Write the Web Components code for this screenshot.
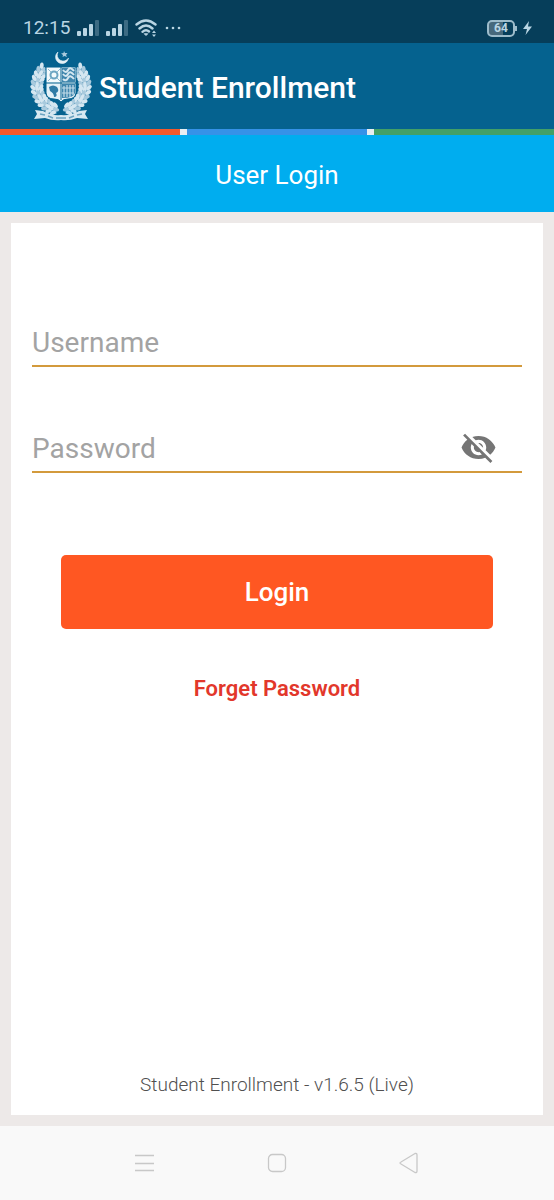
<!DOCTYPE html>
<html lang="en">
<head>
<meta charset="utf-8">
<meta name="viewport" content="width=device-width, initial-scale=1">
<title>Student Enrollment</title>
<style>
  body {
    margin: 0;
    font-family: Roboto, "Liberation Sans", sans-serif;
    background: #ede9e8;
  }
</style>
</head>
<body>
<login-screen></login-screen>

<script>
class StatusBar extends HTMLElement {
  constructor() {
    super();
    this._shadowRoot = this.attachShadow({mode: 'open'});
  }

  connectedCallback() {
    this.render();
  }

  render() {
    const signal = `
      <svg width="23" height="16" viewBox="0 0 23 16" fill="currentColor" aria-hidden="true">
        <rect x="0" y="11" width="4" height="5" rx="1"/>
        <rect x="6" y="8" width="4" height="8" rx="1"/>
        <rect x="12" y="4" width="4" height="12" rx="1"/>
        <rect x="18" y="0" width="4" height="16" rx="1" opacity=".3"/>
      </svg>`;
    this._shadowRoot.innerHTML = `
      <style>
        :host {
          display: flex;
          align-items: center;
          justify-content: space-between;
          box-sizing: border-box;
          height: 43px;
          padding: 13px 22px 0 23px;
          background: #063e5a;
          color: #b9d5e3;
          font-size: 19px;
          line-height: 30px;
        }
        .group {
          display: flex;
          align-items: center;
          gap: 6px;
        }
        .time {
          margin-right: 1px;
        }
        .battery {
          box-sizing: border-box;
          position: relative;
          width: 28px;
          height: 17px;
          margin-right: 2px;
          border: 2px solid #9dbccb;
          border-radius: 5px;
          background: linear-gradient(to right, #47697c 60%, transparent 60%);
          font-size: 12px;
          font-weight: 700;
          line-height: 13px;
          text-align: center;
        }
        .battery::after {
          content: "";
          position: absolute;
          top: 4px;
          right: -4px;
          width: 2px;
          height: 5px;
          background: #9dbccb;
        }
      </style>
      <div class="group">
        <span class="time">12:15</span>
        ${signal}
        ${signal}
        <svg width="23" height="18" viewBox="0 0 23 18" fill="none" stroke="currentColor" stroke-width="2.400" stroke-linecap="round" aria-hidden="true">
          <path d="M1.500 5.500Q11 -2.500 20.500 5.500M4.500 9.500Q11 3.500 17.500 9.500M7.500 12.800Q11 9.800 14 12.500"/>
          <path d="M9.500 15L11 16.500L12.500 15Z" fill="currentColor" stroke-width="1"/>
          <path d="M17 14L19 11.500L21 14ZM17 15.500L19 18L21 15.500Z" fill="currentColor" stroke="none"/>
        </svg>
        <svg width="18" height="4" viewBox="0 0 18 4" fill="currentColor" aria-hidden="true">
          <circle cx="3" cy="2" r="1.300"/><circle cx="9" cy="2" r="1.300"/><circle cx="15" cy="2" r="1.300"/>
        </svg>
      </div>
      <div class="group">
        <div class="battery">64</div>
        <svg width="9" height="14" viewBox="0 0 9 14" fill="currentColor" aria-hidden="true">
          <path d="M6 0L0 8H4L2.500 14L9 5.500H5Z"/>
        </svg>
      </div>
    `;
  }
}
customElements.define('status-bar', StatusBar);

class StateEmblem extends HTMLElement {
  constructor() {
    super();
    this._shadowRoot = this.attachShadow({mode: 'open'});
  }

  connectedCallback() {
    this.render();
  }

  // left half of the wreath, the right half is mirrored
  leaves() {
    let out = '';
    for (let i = 0; i < 13; i++) {
      const deg = 222 - i * 10;
      const a = deg * Math.PI / 180;
      [[20, 38, 2], [24, 0, 0], [28, -38, 2]].forEach(([r, tilt, lag]) => {
        const x = 31 + r * Math.cos(a + lag * 0.04);
        const y = 36 + r * Math.sin(a + lag * 0.04);
        const tone = (i + lag) % 3 ? '#d5e7f1' : '#a9cadd';
        out += `<ellipse cx="${x.toFixed(1)}" cy="${y.toFixed(1)}" rx="3.200" ry="1.900" fill="${tone}"
          transform="rotate(${deg + 90 + tilt} ${x.toFixed(1)} ${y.toFixed(1)})"/>`;
      });
    }
    return out;
  }

  render() {
    this._shadowRoot.innerHTML = `
      <style>
        :host {
          display: block;
        }
        svg {
          display: block;
        }
      </style>
      <svg width="62" height="72" viewBox="0 0 62 72" role="img" aria-label="State emblem">
        <path d="M28 2A6.500 6.500 0 1 0 38.500 8A6 6 0 0 1 28 2Z" fill="#e3f0f6" stroke="#e3f0f6" stroke-width=".6"/>
        <path d="M34 1L35 3L37.500 3L36 5L37 7L34.500 6L32.500 7L33 5L31 3.500L33.500 3Z" fill="#a9cadd"/>
        <g id="half">
          <path d="M12 18A25 25 0 0 0 27 60" fill="none" stroke="#5f9dbf" stroke-width="8"/>
          ${this.leaves()}
        </g>
        <use href="#half" transform="translate(62 0) scale(-1 1)"/>
        <path d="M16 17H46V43Q45 49 38 49Q33 49 31 52Q29 49 24 49Q17 49 16 43Z" fill="#e4f1f7" stroke="#05628f"/>
        <path d="M17 18H30V32H17Z" fill="#f4fafc"/>
        <path d="M32 18H45V32H32ZM32 34H45V43Q44 48 32 48Z" fill="#3f86ad"/>
        <circle cx="24" cy="25" r="3.500" fill="none" stroke="#6da5c2" stroke-width="2"/>
        <path d="M18 19L21 22M30 19L27 22M18 31L21 28M30 31L27 28" stroke="#8db9d0"/>
        <path d="M33 20Q36 24 38 20T44 21M33 24Q36 28 38 24T44 25M33 29Q36 32 38 28T44 29" fill="none" stroke="#d4e7f0" stroke-width="2"/>
        <path d="M19 37Q23 34 27 37Q30 41 26 43Q28 47 24 47Q24 43 20 41Z" fill="#2f7ba5"/>
        <path d="M34 36V47M37 35V47M40 35V47M43 35V45M32 38H45M32 43H44" stroke="#c4dce9" stroke-width="1.200"/>
        <path d="M31 17V50M16 33H46" stroke="#05628f" stroke-width="1"/>
        <path d="M5 60L13 61Q22 66 31 65Q40 66 49 61L57 60L55 64L58 69L47 68Q39 71 31 70Q23 71 15 68L4 69L7 64Z" fill="#d7e8f1"/>
        <path d="M10 64L15 65M18 66L23 68M26 68H36M39 68L44 66M47 65L52 64" stroke="#6ba3c1" stroke-width="1.500"/>
      </svg>
    `;
  }
}
customElements.define('state-emblem', StateEmblem);

class AppHeader extends HTMLElement {
  constructor() {
    super();
    this._shadowRoot = this.attachShadow({mode: 'open'});
  }

  connectedCallback() {
    this.render();
  }

  render() {
    this._shadowRoot.innerHTML = `
      <style>
        :host {
          display: block;
          color: #fff;
        }
        .brand {
          display: flex;
          align-items: center;
          gap: 7px;
          height: 86px;
          padding: 0 30px;
          background: #05628f;
        }
        h1 {
          margin: 0;
          padding-top: 3px;
          font-size: 30px;
          font-weight: 500;
          line-height: 36px;
        }
        .stripes {
          display: grid;
          grid-template-columns: repeat(3, 1fr);
          gap: 7px;
          height: 6px;
          background: #e8eef2;
        }
        .orange { background: #f4592b; }
        .blue { background: #3592e8; }
        .green { background: #43a066; }
        h2 {
          margin: 0;
          padding: 24px 0 21px;
          background: #00adef;
          font-size: 26px;
          font-weight: 400;
          line-height: 32px;
          text-align: center;
        }
      </style>
      <div class="brand">
        <state-emblem></state-emblem>
        <h1>Student Enrollment</h1>
      </div>
      <div class="stripes">
        <span class="orange"></span><span class="blue"></span><span class="green"></span>
      </div>
      <h2><slot></slot></h2>
    `;
  }
}
customElements.define('app-header', AppHeader);

class TextField extends HTMLElement {
  constructor() {
    super();
    this._shadowRoot = this.attachShadow({mode: 'open'});
  }

  connectedCallback() {
    this.render();
  }

  render() {
    const label = this.getAttribute('label');
    const type = this.getAttribute('type') || 'text';
    this._shadowRoot.innerHTML = `
      <style>
        :host {
          display: flex;
          align-items: center;
          height: 48px;
          border-bottom: 2px solid #d39a3c;
        }
        input {
          flex: 1;
          min-width: 0;
          height: 48px;
          padding: 2px 0 0;
          border: 0;
          outline: 0;
          background: none;
          color: #333;
          font: 400 28px/36px Roboto, "Liberation Sans", sans-serif;
        }
        input::placeholder {
          color: #a3a3a3;
          opacity: 1;
        }
      </style>
      <input type="${type}" placeholder="${label}" aria-label="${label}">
      <slot></slot>
    `;
  }

  toggle() {
    const input = this._shadowRoot.querySelector('input');
    input.type = input.type === 'password' ? 'text' : 'password';
  }
}
customElements.define('text-field', TextField);

class VisibilityToggle extends HTMLElement {
  constructor() {
    super();
    this._shadowRoot = this.attachShadow({mode: 'open'});
  }

  connectedCallback() {
    this.render();
    this._shadowRoot.querySelector('button').addEventListener('click', () => {
      this.closest('text-field').toggle();
    });
  }

  render() {
    this._shadowRoot.innerHTML = `
      <style>
        :host {
          display: block;
          padding-right: 25px;
        }
        button {
          display: block;
          padding: 0;
          border: 0;
          background: none;
          color: #757575;
          cursor: pointer;
        }
        svg {
          display: block;
        }
      </style>
      <button type="button" aria-label="Show password">
        <svg width="37" height="37" viewBox="0 0 24 24" aria-hidden="true">
          <path fill="currentColor" d="M12 7c2.760 0 5 2.240 5 5 0 .650-.130 1.260-.360 1.830l2.920 2.920c1.510-1.260 2.700-2.890 3.430-4.750-1.730-4.390-6-7.500-11-7.500-1.400 0-2.740.250-3.980.700l2.160 2.160C10.740 7.130 11.350 7 12 7zM2 4.270l2.280 2.280.460.460C3.080 8.300 1.780 10.020 1 12c1.730 4.390 6 7.500 11 7.500 1.550 0 3.030-.300 4.380-.840l.420.420L19.730 22 21 20.730 3.270 3 2 4.270zM7.530 9.800l1.550 1.550c-.050.210-.080.430-.080.650 0 1.660 1.340 3 3 3 .220 0 .440-.030.650-.080l1.550 1.550c-.670.330-1.410.530-2.200.530-2.760 0-5-2.240-5-5 0-.790.200-1.530.530-2.200zm4.310-.780l3.150 3.150.020-.160c0-1.660-1.340-3-3-3l-.170.010z"/>
        </svg>
      </button>
    `;
  }
}
customElements.define('visibility-toggle', VisibilityToggle);

class LoginForm extends HTMLElement {
  constructor() {
    super();
    this._shadowRoot = this.attachShadow({mode: 'open'});
  }

  connectedCallback() {
    this.render();
  }

  render() {
    this._shadowRoot.innerHTML = `
      <style>
        :host {
          display: flex;
          flex-direction: column;
          box-sizing: border-box;
          padding: 94px 21px 16px;
          background: #fff;
        }
        form {
          display: flex;
          flex-direction: column;
          gap: 56px;
        }
        .actions {
          display: flex;
          flex-direction: column;
          align-items: center;
          gap: 46px;
          padding: 26px 29px 0;
        }
        button {
          width: 100%;
          height: 74px;
          border: 0;
          border-radius: 5px;
          background: #ff5722;
          color: #fff;
          font: 500 26px/32px Roboto, "Liberation Sans", sans-serif;
          cursor: pointer;
        }
        a {
          color: #e2372b;
          font-size: 22px;
          font-weight: 600;
          line-height: 28px;
          text-decoration: none;
        }
        footer {
          margin-top: auto;
          color: #505050;
          font-size: 19px;
          font-weight: 300;
          line-height: 28px;
          text-align: center;
        }
      </style>
      <form>
        <text-field label="Username"></text-field>
        <text-field label="Password" type="password"><visibility-toggle></visibility-toggle></text-field>
        <div class="actions">
          <button type="button">Login</button>
          <a href="#forget">Forget Password</a>
        </div>
      </form>
      <footer><slot name="version"></slot></footer>
    `;
  }
}
customElements.define('login-form', LoginForm);

class NavBar extends HTMLElement {
  constructor() {
    super();
    this._shadowRoot = this.attachShadow({mode: 'open'});
  }

  connectedCallback() {
    this.render();
  }

  render() {
    this._shadowRoot.innerHTML = `
      <style>
        :host {
          display: flex;
          justify-content: center;
          height: 74px;
          background: #f9f9f9;
        }
        button {
          display: flex;
          align-items: center;
          justify-content: center;
          width: 132px;
          padding: 0;
          border: 0;
          background: none;
          color: #c8c8c8;
        }
        svg {
          fill: none;
          stroke: currentColor;
          stroke-width: 1.300;
          stroke-linejoin: round;
        }
      </style>
      <button type="button" aria-label="Menu">
        <svg width="20" height="20" viewBox="0 0 20 20"><path d="M0 2.500H19M0 10.500H19M0 17.500H19"/></svg>
      </button>
      <button type="button" aria-label="Home">
        <svg width="20" height="20" viewBox="0 0 20 20"><rect x="1.500" y="1.500" width="17" height="17" rx="4"/></svg>
      </button>
      <button type="button" aria-label="Back">
        <svg width="20" height="22" viewBox="0 0 20 22"><path d="M16 1.500L2 10Q0 11 2 12L16 20.500Q18 21 18 19V3Q18 1 16 1.500Z"/></svg>
      </button>
    `;
  }
}
customElements.define('nav-bar', NavBar);

class LoginScreen extends HTMLElement {
  constructor() {
    super();
    this._shadowRoot = this.attachShadow({mode: 'open'});
  }

  connectedCallback() {
    this.render();
  }

  render() {
    this._shadowRoot.innerHTML = `
      <style>
        :host {
          display: flex;
          flex-direction: column;
          min-height: 100vh;
        }
        main {
          display: flex;
          flex: 1;
          padding: 11px;
        }
        login-form {
          flex: 1;
        }
      </style>
      <status-bar></status-bar>
      <app-header>User Login</app-header>
      <main>
        <login-form><span slot="version">Student Enrollment - v1.6.5 (Live)</span></login-form>
      </main>
      <nav-bar></nav-bar>
    `;
  }
}
customElements.define('login-screen', LoginScreen);
</script>
</body>
</html>
